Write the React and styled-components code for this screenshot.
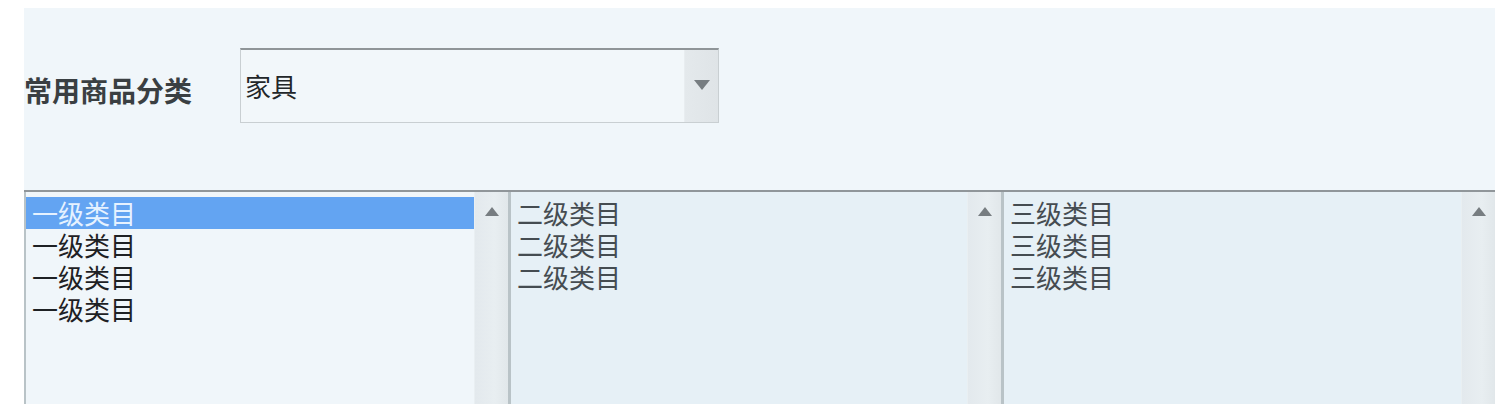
import React from "react";
import styled, { createGlobalStyle } from "styled-components";

const GlobalStyle = createGlobalStyle`
  html, body {
    margin: 0;
    background: #ffffff;
  }
  body {
    padding: 8px 5px 0 24px;
    font-family: "Noto Sans CJK SC", "Noto Sans", sans-serif;
  }
  *, *::before, *::after {
    box-sizing: border-box;
  }
`;

const Panel = styled.div`
  display: flex;
  flex-direction: column;
  width: 1471px;
  height: 396px;
  padding-top: 40px;
  background-color: #f0f6fa;
  overflow: hidden;
`;

const FormRow = styled.div`
  display: flex;
  align-items: center;
  height: 75px;
`;

const Label = styled.label`
  width: 216px;
  font-size: 28px;
  font-weight: bold;
  color: #3a3f42;
  padding-top: 8px;
`;

const Select = styled.div`
  display: flex;
  width: 479px;
  height: 75px;
  border: 1px solid #c9cfd2;
  border-top: 2px solid #8f9598;
  background-color: #f2f7fa;
`;

const SelectValue = styled.div`
  flex: 1;
  display: flex;
  align-items: center;
  padding-left: 4px;
  padding-bottom: 1px;
  font-size: 26px;
  color: #222629;
`;

const SelectButton = styled.div`
  display: flex;
  align-items: center;
  justify-content: center;
  width: 34px;
  padding-bottom: 3px;
  border-left: 1px solid #e8edf0;
  background: linear-gradient(to right, #e4e9ec, #dfe4e7);
`;

const ListRow = styled.div`
  display: flex;
  margin-top: 67px;
  flex: 1;
  border-top: 2px solid #90969a;
`;

const List = styled.div`
  display: flex;
  width: ${(p) => p.$width};
  flex: ${(p) => (p.$grow ? 1 : "none")};
  border-left: ${(p) => p.$border} solid #b9c3c7;
  background-color: ${(p) => p.$bg};
`;

const Items = styled.ul`
  flex: 1;
  margin: 0;
  padding: 5px 0 0;
  list-style: none;
`;

const Item = styled.li`
  height: 32px;
  line-height: 32px;
  padding-left: 6px;
  font-size: 26px;
  color: ${(p) => (p.$selected ? "#e6f2ff" : p.$muted ? "#454c51" : "#1e2124")};
  background-color: ${(p) => (p.$selected ? "#63a4f2" : "transparent")};
`;

const Scrollbar = styled.div`
  display: flex;
  justify-content: center;
  width: 34px;
  padding-top: 15px;
  border-left: 1px solid #e9eff2;
  background: linear-gradient(to right, #e3e9ed, #e8eef1 60%, #e1e7ea);
`;

const Arrow = ({ up, w = 14, h = 9 }) => (
  <svg width={w} height={h} viewBox={`0 0 ${w} ${h}`}>
    <polygon
      points={up ? `${w / 2},0 ${w},${h} 0,${h}` : `0,0 ${w},0 ${w / 2},${h}`}
      fill="#777d81"
    />
  </svg>
);

const lists = [
  { label: "一级类目", count: 4, width: "484px", border: "2px", bg: "#f0f6fa" },
  { label: "二级类目", count: 3, width: "493px", border: "3px", bg: "#e6f0f6", muted: true },
  { label: "三级类目", count: 3, grow: true, border: "3px", bg: "#e6f0f6", muted: true },
];

export default function App() {
  return (
    <>
      <GlobalStyle />
      <Panel>
        <FormRow>
          <Label>常用商品分类</Label>
          <Select>
            <SelectValue>家具</SelectValue>
            <SelectButton>
              <Arrow w={16} h={10} />
            </SelectButton>
          </Select>
        </FormRow>
        <ListRow>
          {lists.map((list, i) => (
            <List
              key={i}
              $width={list.width}
              $grow={list.grow}
              $border={list.border}
              $bg={list.bg}
            >
              <Items>
                {Array.from({ length: list.count }).map((_, j) => (
                  <Item key={j} $selected={i === 0 && j === 0} $muted={list.muted}>
                    {list.label}
                  </Item>
                ))}
              </Items>
              <Scrollbar>
                <Arrow up />
              </Scrollbar>
            </List>
          ))}
        </ListRow>
      </Panel>
    </>
  );
}
